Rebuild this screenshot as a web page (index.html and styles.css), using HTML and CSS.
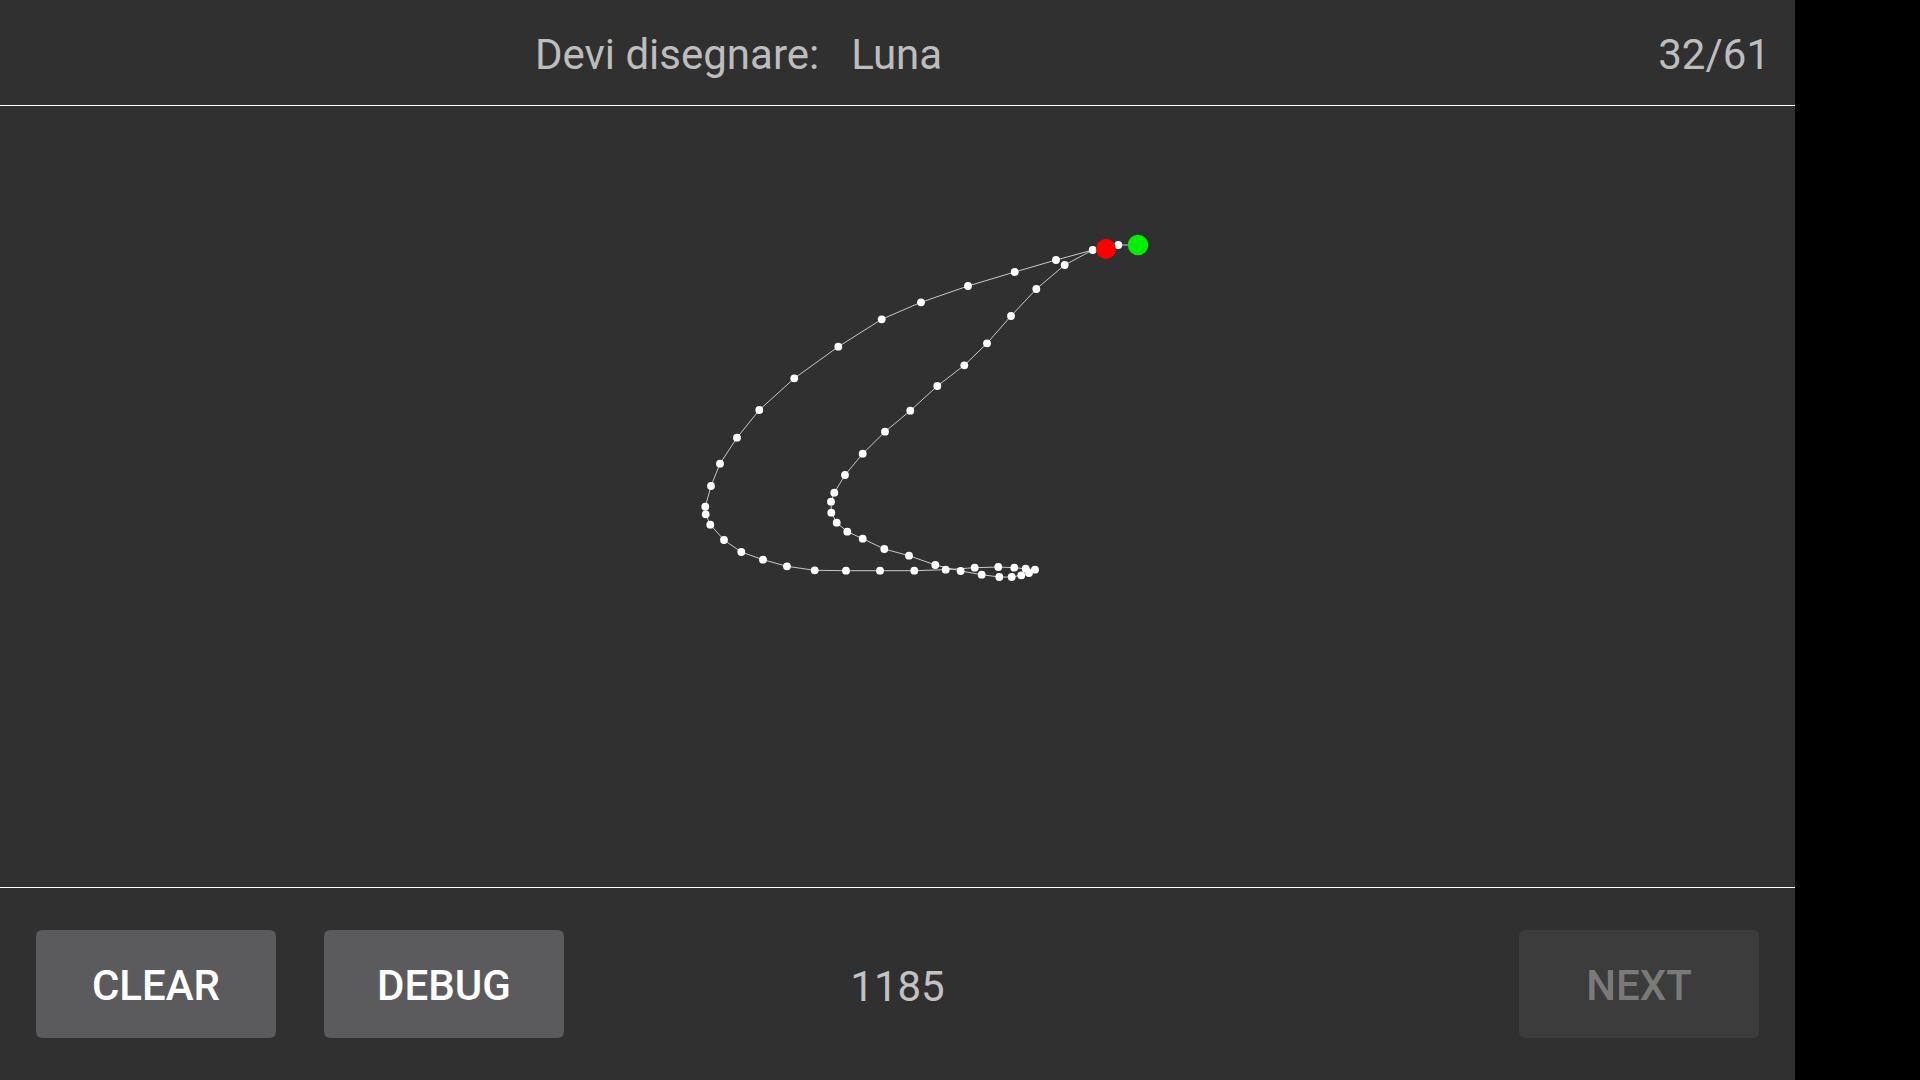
FILE: index.html
```html
<!DOCTYPE html>
<html lang="it">
<head>
<meta charset="utf-8">
<title>Disegna</title>
<link rel="stylesheet" href="styles.css">
</head>
<body>
<div class="app">
  <header class="topbar">
    <div class="title"><span class="label">Devi disegnare:</span><span class="word">Luna</span></div>
    <div class="counter">32/61</div>
  </header>
  <main class="canvas">
    <svg class="drawing" viewBox="0 106 1795 781" width="1795" height="781" xmlns="http://www.w3.org/2000/svg">
      <polyline class="stroke" points="1138,245 1118.3,245 1106,249 1092.7,250 1056,260 1014.7,272 968,286 921,302.3 881.7,319.3 838.3,346.7 794.3,378.3 759.3,410 737,437.7 720,463.7 711,486 705.3,506.7 705.7,514.3 710.3,524.7 724,540 741.3,552 763,559.7 787,566.3 814.7,570.3 846,570.7 880,570.7 914.3,570.7 945.7,569.7 974.7,567.7 998.3,567 1014.3,567.7 1025.7,568.7 1035,569.7 1029,573 1021.3,575.3 1011.7,577 999.3,577 981.7,574.7 960.7,571 935.3,565 909,555.7 884.3,549 862.7,538.7 847.3,531.7 836.7,522.7 831.3,512.7 831,501.7 834.3,492.7 845,475 862.7,453.7 885,431.7 910.3,410.7 937.3,386 964.3,365.3 987,343.3 1011,316 1036.3,289 1064.7,265 1092.7,250"/>
      <g class="dots">
        <circle cx="1118.3" cy="245" r="3.9"/>
        <circle cx="1092.7" cy="250" r="3.9"/>
        <circle cx="1056" cy="260" r="3.9"/>
        <circle cx="1014.7" cy="272" r="3.9"/>
        <circle cx="968" cy="286" r="3.9"/>
        <circle cx="921" cy="302.3" r="3.9"/>
        <circle cx="881.7" cy="319.3" r="3.9"/>
        <circle cx="838.3" cy="346.7" r="3.9"/>
        <circle cx="794.3" cy="378.3" r="3.9"/>
        <circle cx="759.3" cy="410" r="3.9"/>
        <circle cx="737" cy="437.7" r="3.9"/>
        <circle cx="720" cy="463.7" r="3.9"/>
        <circle cx="711" cy="486" r="3.9"/>
        <circle cx="705.3" cy="506.7" r="3.9"/>
        <circle cx="705.7" cy="514.3" r="3.9"/>
        <circle cx="710.3" cy="524.7" r="3.9"/>
        <circle cx="724" cy="540" r="3.9"/>
        <circle cx="741.3" cy="552" r="3.9"/>
        <circle cx="763" cy="559.7" r="3.9"/>
        <circle cx="787" cy="566.3" r="3.9"/>
        <circle cx="814.7" cy="570.3" r="3.9"/>
        <circle cx="846" cy="570.7" r="3.9"/>
        <circle cx="880" cy="570.7" r="3.9"/>
        <circle cx="914.3" cy="570.7" r="3.9"/>
        <circle cx="945.7" cy="569.7" r="3.9"/>
        <circle cx="974.7" cy="567.7" r="3.9"/>
        <circle cx="998.3" cy="567" r="3.9"/>
        <circle cx="1014.3" cy="567.7" r="3.9"/>
        <circle cx="1025.7" cy="568.7" r="3.9"/>
        <circle cx="1035" cy="569.7" r="3.9"/>
        <circle cx="1029" cy="573" r="3.9"/>
        <circle cx="1021.3" cy="575.3" r="3.9"/>
        <circle cx="1011.7" cy="577" r="3.9"/>
        <circle cx="999.3" cy="577" r="3.9"/>
        <circle cx="981.7" cy="574.7" r="3.9"/>
        <circle cx="960.7" cy="571" r="3.9"/>
        <circle cx="935.3" cy="565" r="3.9"/>
        <circle cx="909" cy="555.7" r="3.9"/>
        <circle cx="884.3" cy="549" r="3.9"/>
        <circle cx="862.7" cy="538.7" r="3.9"/>
        <circle cx="847.3" cy="531.7" r="3.9"/>
        <circle cx="836.7" cy="522.7" r="3.9"/>
        <circle cx="831.3" cy="512.7" r="3.9"/>
        <circle cx="831" cy="501.7" r="3.9"/>
        <circle cx="834.3" cy="492.7" r="3.9"/>
        <circle cx="845" cy="475" r="3.9"/>
        <circle cx="862.7" cy="453.7" r="3.9"/>
        <circle cx="885" cy="431.7" r="3.9"/>
        <circle cx="910.3" cy="410.7" r="3.9"/>
        <circle cx="937.3" cy="386" r="3.9"/>
        <circle cx="964.3" cy="365.3" r="3.9"/>
        <circle cx="987" cy="343.3" r="3.9"/>
        <circle cx="1011" cy="316" r="3.9"/>
        <circle cx="1036.3" cy="289" r="3.9"/>
        <circle cx="1064.7" cy="265" r="3.9"/>
      </g>
      <circle class="end" cx="1106" cy="249" r="10"/>
      <circle class="start" cx="1138" cy="245" r="10.3"/>
    </svg>
  </main>
  <footer class="bottombar">
    <div class="left-group">
      <button class="btn">CLEAR</button>
      <button class="btn">DEBUG</button>
    </div>
    <div class="score">1185</div>
    <div class="right-group">
      <button class="btn btn-disabled" disabled>NEXT</button>
    </div>
  </footer>
</div>
</body>
</html>
```

FILE: styles.css
```css
html, body {
  margin: 0;
  padding: 0;
  background: #000;
}

body {
  width: 1920px;
  height: 1080px;
  overflow: hidden;
  font-family: Roboto, "Liberation Sans", sans-serif;
}

.app {
  width: 1795px;
  height: 1080px;
  background: #303030;
  display: flex;
  flex-direction: column;
}

.topbar {
  height: 101px;
  padding-top: 4px;
  border-bottom: 1px solid #ffffff;
  display: flex;
  align-items: center;
  color: #bdbdbd;
  font-size: 42px;
  font-weight: 400;
}

.title {
  flex: 1;
  text-align: center;
}

.word {
  margin-left: 32px;
}

.counter {
  width: 293px;
  padding-right: 25px;
  text-align: right;
}

.canvas {
  height: 781px;
  position: relative;
}

.drawing {
  display: block;
}

.stroke {
  fill: none;
  stroke: #c8c8c8;
  stroke-width: 1;
}

.dots circle {
  fill: #ffffff;
}

.end {
  fill: #ff0000;
}

.start {
  fill: #00f000;
}

.bottombar {
  flex: 1;
  border-top: 1px solid #ffffff;
  padding: 0 36px;
  display: grid;
  grid-template-columns: 1fr auto 1fr;
  align-items: center;
}

.left-group {
  display: flex;
  gap: 48px;
  justify-self: start;
}

.right-group {
  justify-self: end;
}

.btn {
  width: 240px;
  height: 108px;
  padding: 4px 0 0;
  border: none;
  border-radius: 6px;
  background: #5b5b5d;
  color: #ffffff;
  font-family: Roboto, "Liberation Sans", sans-serif;
  font-size: 42px;
  font-weight: 500;
  line-height: 1;
}

.btn-disabled {
  background: #3c3c3c;
  color: #7a7a7a;
}

.score {
  color: #c2c2c2;
  font-size: 42px;
  padding-top: 4px;
}
```
